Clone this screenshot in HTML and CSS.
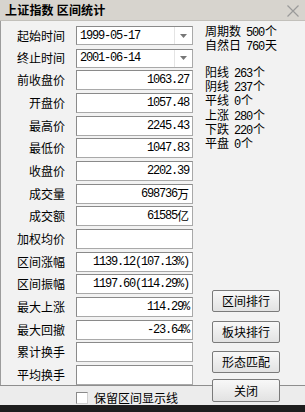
FILE: index.html
```html
<!DOCTYPE html>
<html lang="zh-CN">

<head>
    <meta charset="UTF-8">
    <meta name="viewport" content="width=device-width, initial-scale=1.0">
    <title>区间统计</title>

    <link rel="stylesheet" href="styles.css">
</head>

<body>
    <div class="window">
        <div class="titlebar">
            <span class="title">上证指数 区间统计</span>
            <svg class="close" width="12" height="12" viewBox="0 0 12 12">
                <path d="M0.5 0.5 L11.5 11.5 M11.5 0.5 L0.5 11.5" stroke="#9a9a9a" stroke-width="1.2" fill="none" />
            </svg>
        </div>

        <div class="main">
            <div class="fields">
                <div class="row">
                    <span class="label">起始时间</span>
                    <div class="combo">
                        <span class="num">1999-05-17</span>
                        <span class="drop"><svg width="7" height="4" viewBox="0 0 7 4"><path d="M0 0 H7 L3.5 4 Z" fill="#777" /></svg></span>
                    </div>
                </div>
                <div class="row">
                    <span class="label">终止时间</span>
                    <div class="combo">
                        <span class="num">2001-06-14</span>
                        <span class="drop"><svg width="7" height="4" viewBox="0 0 7 4"><path d="M0 0 H7 L3.5 4 Z" fill="#777" /></svg></span>
                    </div>
                </div>
                <div class="row"><span class="label">前收盘价</span><div class="box"><span class="num">1063.27</span></div></div>
                <div class="row"><span class="label">开盘价</span><div class="box"><span class="num">1057.48</span></div></div>
                <div class="row"><span class="label">最高价</span><div class="box"><span class="num">2245.43</span></div></div>
                <div class="row"><span class="label">最低价</span><div class="box"><span class="num">1047.83</span></div></div>
                <div class="row"><span class="label">收盘价</span><div class="box"><span class="num">2202.39</span></div></div>
                <div class="row"><span class="label">成交量</span><div class="box"><span class="num">698736</span>万</div></div>
                <div class="row"><span class="label">成交额</span><div class="box"><span class="num">61585</span>亿</div></div>
                <div class="row"><span class="label">加权均价</span><div class="box"></div></div>
                <div class="row"><span class="label">区间涨幅</span><div class="box"><span class="num">1139.12(107.13%)</span></div></div>
                <div class="row"><span class="label">区间振幅</span><div class="box"><span class="num">1197.60(114.29%)</span></div></div>
                <div class="row"><span class="label">最大上涨</span><div class="box"><span class="num">114.29%</span></div></div>
                <div class="row"><span class="label">最大回撤</span><div class="box"><span class="num">-23.64%</span></div></div>
                <div class="row"><span class="label">累计换手</span><div class="box"></div></div>
                <div class="row"><span class="label">平均换手</span><div class="box"></div></div>
            </div>

            <div class="side">
                <div class="period">
                    <p>周期数<span class="num">500</span>个</p>
                    <p>自然日<span class="num">760</span>天</p>
                </div>
                <div class="counts">
                    <p>阳线<span class="num">263</span>个</p>
                    <p>阴线<span class="num">237</span>个</p>
                    <p>平线<span class="num">0</span>个</p>
                    <p>上涨<span class="num">280</span>个</p>
                    <p>下跌<span class="num">220</span>个</p>
                    <p>平盘<span class="num">0</span>个</p>
                </div>
                <div class="actions">
                    <button class="btn">区间排行</button>
                    <button class="btn">板块排行</button>
                    <button class="btn">形态匹配</button>
                </div>
            </div>
        </div>

        <div class="footer">
            <label class="keep"><span class="check"></span>保留区间显示线</label>
            <button class="btn btn-close">关闭</button>
        </div>
        <div class="taskbar"></div>
    </div>
</body>

</html>
```

FILE: styles.css
```css
* {
    box-sizing: border-box;
}

body {
    margin: 0;
    font-family: "Noto Sans CJK SC", "Liberation Sans", sans-serif;
    font-size: 12px;
    color: #000;
    background: #1e1e1e;
}

p {
    margin: 0;
}

.window {
    width: 305px;
    height: 412px;
    display: flex;
    flex-direction: column;
    background: #f1f1f1;
    overflow: hidden;
}

.titlebar {
    height: 21px;
    flex: none;
    display: flex;
    align-items: center;
    justify-content: space-between;
    padding: 0 6px 1px 5px;
    background: #d7d4ce;
    border-bottom: 1px solid #c2c0bb;
}

.title {
    font-weight: bold;
    font-size: 12px;
    line-height: 14px;
    letter-spacing: 0.2px;
}

.close {
    display: block;
    margin-top: 2px;
}

.main {
    height: 364px;
    flex: none;
    display: flex;
    overflow: hidden;
    border-left: 1px solid #9c9c9c;
    background: #f2f2f2;
}

/* left column: label + value boxes */
.fields {
    display: flex;
    flex-direction: column;
    gap: 2.67px;
    padding-top: 5px;
}

.row {
    display: grid;
    grid-template-columns: 64px 117px;
    column-gap: 11px;
    height: 20px;
    align-items: center;
}

.label {
    text-align: right;
    line-height: 14px;
}

.box,
.combo {
    height: 20px;
    background: #fff;
    border: 1px solid #a9a9a9;
    border-top-color: #8a8a8a;
    border-left-color: #8a8a8a;
    display: flex;
    align-items: center;
    line-height: 14px;
}

.box {
    justify-content: flex-end;
    padding-right: 3px;
}

.combo {
    height: 19px;
    padding-left: 3px;
    justify-content: space-between;
}

.drop {
    width: 18px;
    height: 100%;
    display: flex;
    align-items: center;
    justify-content: center;
    border-left: 1px solid #e4e4e4;
}

.drop svg {
    display: block;
}

.num {
    font-family: "Liberation Mono", monospace;
    font-size: 12px;
    letter-spacing: -1.2px;
}

/* right column */
.side {
    flex: 1;
    display: flex;
    flex-direction: column;
    padding: 4px 0 12px 12px;
}

.side .num {
    margin-left: 5px;
    margin-right: 1px;
}

.period p {
    line-height: 12px;
}

.counts {
    margin-top: 13px;
}

.counts p {
    line-height: 11.2px;
}

.actions {
    margin-top: auto;
    padding-left: 7px;
    display: flex;
    flex-direction: column;
    gap: 8.5px;
}

.btn {
    width: 68px;
    height: 22px;
    padding: 0;
    font-family: "Noto Sans CJK SC", sans-serif;
    font-size: 12px;
    line-height: 14px;
    color: #000;
    background: linear-gradient(#f8f8f8, #e2e2e2);
    border: 1px solid #7a7a7a;
    border-radius: 2px;
}

/* bottom strip */
.footer {
    height: 20px;
    flex: none;
    display: flex;
    align-items: flex-start;
    border-top: 1px solid #8e8e8e;
    background: #ececec;
    padding-left: 76px;
}

.keep {
    display: flex;
    align-items: center;
    gap: 6px;
    margin-top: 5px;
    line-height: 14px;
}

.check {
    width: 12px;
    height: 12px;
    background: #fff;
    border: 1px solid #8a8a8a;
    border-right-color: #d0d0d0;
    border-bottom-color: #d0d0d0;
}

.btn-close {
    margin-left: auto;
    margin-right: 25px;
    margin-top: -7px;
    height: 23px;
}

.taskbar {
    flex: 1;
    background: #1e1e1e;
}
```
